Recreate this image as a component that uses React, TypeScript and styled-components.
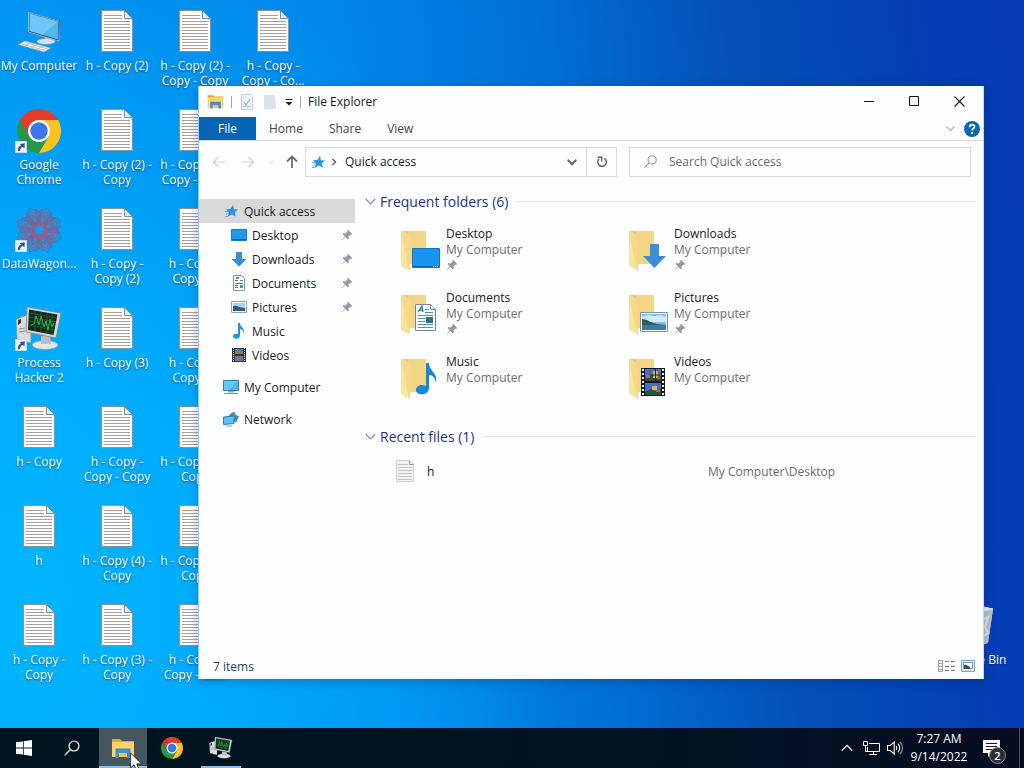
import React from "react";
import styled, { createGlobalStyle, css } from "styled-components";

const GlobalStyle = createGlobalStyle`
  *, *::before, *::after { box-sizing: border-box; }
  body { margin: 0; }
  body, button, input { font-family: "Open Sans", "Noto Sans", sans-serif; font-size: 12px; }
  button { border: 0; padding: 0; background: none; color: inherit; cursor: default; }
  a { color: inherit; text-decoration: none; }
  svg { display: block; flex: none; }
`;

/* ---------- Desktop ---------- */

const Screen = styled.div`
  display: flex;
  flex-direction: column;
  min-height: 100vh;
  overflow: hidden;
  background:
    radial-gradient(ellipse 56% 90% at 0% 78%, rgba(0, 182, 255, 1) 0%, rgba(0, 176, 255, 0.85) 40%, rgba(0, 150, 245, 0) 100%),
    linear-gradient(84deg, #0090ee 0%, #0089ea 36%, #0070d6 56%, #0450b8 73%, #0340b4 88%, #0639b4 100%);
`;

const Desktop = styled.main`
  position: relative;
  flex: 1;
`;

const IconGrid = styled.div`
  display: grid;
  grid-template-columns: repeat(auto-fill, 78px);
  grid-template-rows: repeat(7, 99px);
  grid-auto-flow: column;
`;

const Shortcut = styled.a<{ $last?: boolean }>`
  display: flex;
  flex-direction: column;
  align-items: center;
  padding-top: 8px;
  color: #fff;
  line-height: 15px;
  text-align: center;
  white-space: nowrap;
  text-shadow: 0 1px 2px rgba(0, 40, 90, 0.7);
  ${(p) => p.$last && css`grid-column: -2; grid-row: 7;`}
`;

const ShortcutArt = styled.span`
  position: relative;
  margin-bottom: 2px;
`;

const ArrowBadge = styled.svg`
  position: absolute;
  left: 0;
  bottom: 2px;
`;

/* ---------- Explorer window ---------- */

const Window = styled.section`
  position: absolute;
  top: 86px;
  right: 40px;
  bottom: 49px;
  left: 198px;
  display: flex;
  flex-direction: column;
  border-left: 1px solid #8fd0f2;
  border-right: 1px solid #c5d8f2;
  background: #fdfeff;
  color: #1a1a1a;
  box-shadow: 0 3px 10px rgba(0, 20, 80, 0.25);
`;

const TitleBar = styled.header`
  display: flex;
  align-items: center;
  height: 31px;
  padding: 0 1px 0 8px;
`;

const QuickTools = styled.div`
  display: flex;
  align-items: center;
  gap: 7px;
`;

const Divider = styled.span`
  width: 1px;
  height: 12px;
  background: #a5a5a8;
`;

const Title = styled.h1`
  flex: 1;
  margin: 0 0 0 7px;
  font-size: 12px;
  font-weight: 400;
`;

const WindowButton = styled.button`
  display: grid;
  place-items: center;
  width: 45px;
  height: 31px;
`;

const Ribbon = styled.nav`
  display: flex;
  align-items: center;
  height: 24px;
  padding-right: 3px;
  border-bottom: 1px solid #dadbdc;
`;

const RibbonTab = styled.button<{ $file?: boolean }>`
  align-self: stretch;
  padding: 0 13px;
  color: #444;
  ${(p) => p.$file && css`padding: 0 19px; background: #0564b4; color: #fff;`}
`;

const RibbonEnd = styled.div`
  display: flex;
  align-items: center;
  gap: 9px;
  margin-left: auto;
`;

const AddressRow = styled.div`
  display: flex;
  align-items: center;
  height: 41px;
  padding: 0 12px 0 6px;
`;

const NavButton = styled.button<{ $width: number }>`
  display: grid;
  place-items: center;
  width: ${(p) => p.$width}px;
  height: 28px;
`;

const AddressBox = styled.div`
  display: flex;
  flex: 306 1 0;
  align-items: center;
  height: 30px;
  margin-right: 12px;
  padding-left: 4px;
  border: 1px solid #d9d9d9;
`;

const Crumb = styled.button`
  flex: 1;
  padding-left: 3px;
  text-align: left;
`;

const RefreshButton = styled.button`
  display: grid;
  place-items: center;
  width: 30px;
  height: 28px;
  border-left: 1px solid #d9d9d9;
`;

const SearchBox = styled.label`
  display: flex;
  flex: 312 1 0;
  align-items: center;
  gap: 12px;
  height: 30px;
  padding: 0 14px;
  border: 1px solid #d9d9d9;
`;

const SearchInput = styled.input`
  flex: 1;
  min-width: 0;
  padding: 0;
  border: 0;
  outline: 0;
  background: none;
  &::placeholder { color: #6b6b6b; opacity: 1; }
`;

const Body = styled.div`
  display: flex;
  flex: 1;
`;

const SideNav = styled.nav`
  width: 156px;
  padding-top: 17px;
`;

const SideLink = styled.a<{ $child?: boolean; $active?: boolean; $spaced?: boolean }>`
  display: flex;
  align-items: center;
  gap: 5px;
  height: 24px;
  margin-top: ${(p) => (p.$spaced ? 8 : 0)}px;
  padding: 0 2px 0 ${(p) => (p.$child ? 32 : 24)}px;
  background: ${(p) => (p.$active ? "#d9d9d9" : "transparent")};
`;

const SideText = styled.span`
  flex: 1;
`;

const Content = styled.div`
  flex: 1;
  padding: 7px 7px 0 10px;
`;

const GroupHeading = styled.h2`
  display: flex;
  align-items: center;
  gap: 4px;
  height: 24px;
  margin: 0;
  color: #1e3287;
  font-size: 14px;
  font-weight: 400;
  &::after {
    content: "";
    flex: 1;
    height: 1px;
    margin-left: 4px;
    background: #dfe3ea;
  }
`;

const FolderGrid = styled.div`
  display: grid;
  grid-template-columns: repeat(auto-fill, 228px);
  margin: 5px 0 14px 36px;
`;

const FolderCard = styled.a`
  display: flex;
  gap: 5px;
  height: 64px;
  padding-top: 8px;
  line-height: 16px;
`;

const FolderText = styled.span`
  display: flex;
  flex-direction: column;
`;

const Muted = styled.span`
  color: #6d6d6d;
`;

const PinLine = styled.span`
  display: flex;
  align-items: center;
  height: 14px;
`;

const RecentRow = styled.a`
  display: grid;
  grid-template-columns: 31px 281px 1fr;
  align-items: center;
  height: 28px;
  margin-top: 9px;
  padding-left: 31px;
`;

const StatusBar = styled.footer`
  display: flex;
  align-items: center;
  gap: 6px;
  height: 26px;
  padding: 0 8px 0 14px;
  color: #333c50;
`;

const StatusText = styled.span`
  flex: 1;
`;

/* ---------- Taskbar ---------- */

const Taskbar = styled.footer`
  display: flex;
  height: 40px;
  background: linear-gradient(90deg, #001520 0%, #00131f 45%, #031124 75%, #070c1f 100%);
  color: #fff;
`;

const AppButtons = styled.div`
  display: flex;
  gap: 1px;
  margin-left: 3px;
`;

const TaskButton = styled.button<{ $active?: boolean; $running?: boolean }>`
  position: relative;
  display: grid;
  place-items: center;
  width: 48px;
  height: 40px;
  background: ${(p) => (p.$active ? "#46565f" : "transparent")};
  ${(p) => (p.$active || p.$running) && css`
    &::after {
      content: "";
      position: absolute;
      right: ${p.$active ? 0 : 4}px;
      bottom: 0;
      left: ${p.$active ? 0 : 4}px;
      height: 2px;
      background: #80bfee;
    }
  `}
`;

const Pointer = styled.svg`
  position: absolute;
  top: 24px;
  left: 31px;
  z-index: 2;
`;

const Tray = styled.div`
  display: flex;
  align-items: center;
  margin-left: auto;
`;

const TrayButton = styled.button<{ $width: number }>`
  display: grid;
  place-items: center;
  width: ${(p) => p.$width}px;
  height: 40px;
`;

const Clock = styled.time`
  width: 66px;
  line-height: 18px;
  text-align: center;
`;

const Notices = styled.button`
  position: relative;
  width: 47px;
  height: 40px;
  padding-left: 11px;
`;

const NoticeCount = styled.span`
  position: absolute;
  top: 19px;
  left: 17px;
  width: 17px;
  height: 17px;
  border: 1px solid #8b8e98;
  border-radius: 50%;
  background: #2b2e3b;
  font-size: 11px;
  font-weight: 600;
  line-height: 15px;
`;

const ShowDesktop = styled.button`
  width: 5px;
  height: 40px;
  border-left: 1px solid #4a5060;
`;

/* ---------- Drawings ---------- */

const TextFileArt = () => (
  <svg width="48" height="48" viewBox="0 0 48 48">
    <path d="M8.500 2.500h23l8 8v33h-31z" fill="#fdfdfb" stroke="#85939b" />
    <path d="M31.500 2.500v8h8z" fill="#d9eef9" stroke="#7c8c96" />
    <path d="M11 7.500h18M11 10.500h18M11 13.500h26M11 16.500h26M11 19.500h26M11 22.500h26M11 25.500h26M11 28.500h26M11 31.500h26M11 34.500h26M11 37.500h26M11 40.500h26" stroke="#a5a1a0" />
  </svg>
);

const ComputerArt = () => (
  <svg width="48" height="48" viewBox="0 0 48 48">
    <path d="M13.500 4.500 45 12.500 44 33 13.500 24z" fill="#1a3550" />
    <path d="M14.500 5.500 43 13.500v18L14.500 23z" fill="#4fb6f3" />
    <path d="M14.500 5.500 43 13.500 28 27 14.500 23z" fill="#83cef8" opacity=".6" />
    <path d="M13.500 4.500 44 13v20L13.500 24z" fill="none" stroke="#bfe0ee" strokeWidth=".7" />
    <path d="M30 29l7 2v4l-7-1z" fill="#b3c1c8" />
    <ellipse cx="31" cy="33.500" rx="9" ry="2.800" fill="#dbe4e8" stroke="#9eb0ba" strokeWidth=".6" />
    <path d="M3 36.500 10 33l26 7-7 4z" fill="#f0f3f5" stroke="#8fa3ad" strokeWidth=".7" />
    <path d="m7 36 23 6.500M10 34.500 33 41M10 38l6-3.500M16 40l6-4M22 42l6-4" stroke="#a8b5bc" strokeWidth=".7" />
  </svg>
);

const ChromeArt = ({ size }: { size: number }) => (
  <svg width={size} height={size} viewBox="0 0 48 48">
    <path d="M24 13H43.050A22 22 0 0 1 24 46L33.500 29.500z" fill="#fcc31e" />
    <path d="M33.500 29.500 24 46A22 22 0 0 1 4.950 13L14.500 29.500z" fill="#279847" />
    <path d="M4.950 13A22 22 0 0 1 43.050 13H24z" fill="#e33b2e" />
    <path d="M4.950 13 14.500 29.500 24 24V13z" fill="#e33b2e" />
    <circle cx="24" cy="24" r="11" fill="#fff" />
    <circle cx="24" cy="24" r="8.700" fill="#3b78e7" />
  </svg>
);

const angles = [0, 45, 90, 135, 180, 225, 270, 315];

const WagonArt = () => (
  <svg width="48" height="48" viewBox="0 0 48 48">
    <g fill="none" strokeWidth="1">
      {angles.map((a) => (
        <g key={a} transform={`rotate(${a + 22} 24 24)`}>
          <path d="M24 18 15 9 24 .500 33 9z" stroke="#4a76b0" />
          <path d="M19 18 13 6 24 12 35 6 29 18" stroke="#6a6f9c" />
          <path d="M24 18 19 10l5-6 5 6z" stroke="#b4506e" />
          <path d="m18 14 6 6 6-6" stroke="#c04c66" />
          <circle cx="24" cy="9" r="1.500" fill="#b05272" />
        </g>
      ))}
    </g>
  </svg>
);

const HackerArt = ({ size }: { size: number }) => (
  <svg width={size} height={size} viewBox="0 0 48 48">
    <path d="M1 14 12 10l4 2v26L2 34z" fill="#d8dcdd" stroke="#848b8e" strokeWidth=".7" />
    <path d="M3 15l3-1v4l-3 2z" fill="#30383b" />
    <path d="M4 24l6-1M4 27l6-1" stroke="#8b9497" />
    <ellipse cx="30" cy="40" rx="13" ry="4.500" fill="#e3e7e8" stroke="#899295" strokeWidth=".7" />
    <path d="M26 31h9l1 8H26z" fill="#b8bfc1" />
    <path d="M12 2 46 8 41 33 11 27z" fill="#d3d8d5" stroke="#7d8687" strokeWidth=".8" />
    <path d="M14 4.500 42.500 9.500 38.500 30 13 25z" fill="#0f2b1b" />
    <path d="M14 8l28 5M14 12l27 5M14 16l26 5M14 20l25 5M20 6v20M26 7v20M32 8v20M37 9v20" stroke="#2c6a3a" strokeWidth=".7" />
    <path d="m16 20 3-1 2-8 3 9 2-9 3 11 2-6 2 9 2-11 2 8 2-4" fill="none" stroke="#35b040" strokeWidth="1" />
  </svg>
);

const BinArt = () => (
  <svg width="48" height="48" viewBox="0 0 48 48">
    <path d="M8 7 24 3l18 4-5 34-13 4-11-4z" fill="#cbd2d8" />
    <path d="M24 10 42 7l-5 34-13 4z" fill="#b7c0c9" />
    <path d="M8 7 24 3l18 4-18 4z" fill="#eef3f6" stroke="#dce5ea" />
    <path d="m29 19 8-4-3 10 3 6-6 4" fill="none" stroke="#e2e7ea" strokeWidth="2" />
  </svg>
);

const LinkBadge = () => (
  <ArrowBadge width="12" height="12" viewBox="0 0 12 12">
    <path d="M.500.500h11v11h-11z" fill="#f5f9fb" stroke="#c9dce6" />
    <path d="M3 10C2.600 7 4 5 6 4.500L4.800 3 9.800 2.300 9.500 7.300 7.800 6C6 6.500 5 8 5 10z" fill="#27589c" />
  </ArrowBadge>
);

const ExplorerArt = ({ size }: { size: number }) => (
  <svg width={size} height={size} viewBox="0 0 24 24">
    <path d="M1 3h8l2 2h12v4H1z" fill="#e6a52c" />
    <path d="M1 6h22v15H1z" fill="#fcd46b" />
    <path d="M4.500 12.500h15V22H16v-5H8v5H4.500z" fill="#3e90cc" />
    <path d="M9 17h6v4H9z" fill="#f7c24d" />
  </svg>
);

const StarArt = () => (
  <svg width="16" height="16" viewBox="0 0 16 16">
    <path d="m10 2 .9 4.200 4.300.2-3.400 2.900 1 4.500-4-2.400-3.900 2.400.9-4.500L3 6.300l4.400-.4z" fill="#2594de" />
    <path d="M2 8.500h3M3 11h2M2 13.500h3" stroke="#63b7ea" />
  </svg>
);

const PinArt = () => (
  <svg width="12" height="12" viewBox="0 0 12 12">
    <path d="m7 .800 4.300 4.100-1 .900-.900-.300-1.900 2 .300 2-1 .900L4.400 8 1 11.300.600 11 4 7.400 1.600 5l.900-.900 2 .300 2-2-.400-.800z" fill="#8f9ba4" />
  </svg>
);

const DesktopSmall = () => (
  <svg width="16" height="16" viewBox="0 0 16 16">
    <path d="M.500 2.500h15v11H.500z" fill="#1e9bf0" stroke="#1779c4" />
    <path d="M1 12.500h14" stroke="#0d62a8" />
  </svg>
);
const DownSmall = () => (
  <svg width="16" height="16" viewBox="0 0 16 16">
    <path d="M5 1h6v7h4.500L8 15.500.500 8H5z" fill="#388dd2" />
  </svg>
);
const DocSmall = () => (
  <svg width="16" height="16" viewBox="0 0 16 16">
    <path d="M2.500.500h8l3 3v12h-11z" fill="#fff" stroke="#7f95a5" />
    <path d="M4 5.500h3M4 8.500h8M4 10.500h3M4 12.500h3M9 5.500h3" stroke="#3c82ad" />
    <path d="M5 2h3v2H5zM9 10h3v3H9z" fill="#4094c2" />
  </svg>
);
const PictureSmall = () => (
  <svg width="16" height="16" viewBox="0 0 16 16">
    <path d="M.500 2.500h15v11H.500z" fill="#fff" stroke="#96a0a9" />
    <path d="M2 4h12v8H2z" fill="#a8d4ee" />
    <path d="M2 7c4-1 6 2 12 2v3H2z" fill="#33597e" />
  </svg>
);
const MusicSmall = () => (
  <svg width="16" height="16" viewBox="0 0 16 16">
    <path d="M7 0h2c0 4 5 4.500 3.500 10-.300-2.500-1.500-3.500-3.500-4v6.500C9 16.500 2 16.800 2 13.300c0-2.300 3-3.300 5-2z" fill="#1b94e4" />
  </svg>
);
const VideoSmall = () => (
  <svg width="16" height="16" viewBox="0 0 16 16">
    <path d="M1 1h14v14H1z" fill="#34353b" />
    <path d="M4 2h8v5H4zM4 9h8v5H4z" fill="#587bbc" />
    <path d="m4 6 4-3 4 4H4zM4 13l4-3 4 4H4z" fill="#8a7c50" />
    <path d="M2.500 1v14M13.500 1v14" stroke="#e4e4e4" strokeDasharray="1 1" />
  </svg>
);
const PcSmall = () => (
  <svg width="16" height="16" viewBox="0 0 16 16">
    <path d="M.500 1.500h15v10H.500z" fill="#4fb9ea" stroke="#2b7fae" />
    <path d="m1 2 14 0-9 9H1z" fill="#8ad6f5" opacity=".5" />
    <path d="M5 12h6v1.500H5z" fill="#8ea9b6" />
    <path d="M1 14.500h14" stroke="#82949d" />
  </svg>
);
const NetworkSmall = () => (
  <svg width="16" height="16" viewBox="0 0 16 16">
    <path d="M6 4 11 .500l1.500 3L16 5.500l-3 6-7-3z" fill="#3a8fbd" />
    <path d="m.500 6 10.500-1v7.500L.500 13.500z" fill="#5fc0ef" stroke="#2683b6" />
    <path d="M3 15h6" stroke="#7da1b4" />
  </svg>
);

const overlays: Record<string, React.ReactNode> = {
  Desktop: (
    <>
      <path d="M11.500 20.500h27v19h-27z" fill="#1795ef" stroke="#1278c6" />
      <path d="M12 38.500h26" stroke="#0b5da3" />
      <path d="M32 38.500h5" stroke="#d4ebfa" strokeDasharray="1 1" />
    </>
  ),
  Downloads: <path d="M21 16h9v12h7L25.500 40 14 28h7z" fill="#388fd6" />,
  Documents: (
    <>
      <path d="M14.500 12.500h15l5 5v21h-20z" fill="#fff" stroke="#758895" />
      <path d="M29.500 12.500v5h5" fill="#e5edf2" stroke="#758895" />
      <path d="m17 20 4-6 1 6m-4-2h4" fill="none" stroke="#2480b4" strokeWidth="1.300" />
      <path d="M24 17.500h4M24 20.500h8M17 23.500h15M17 26.500h7M17 29.500h7M17 32.500h15M17 35.500h15" stroke="#4e93bd" />
      <path d="M25 25h7v6h-7z" fill="#386d80" />
    </>
  ),
  Pictures: (
    <>
      <path d="M11.500 20.500h27v19h-27z" fill="#fff" stroke="#6d93b5" />
      <path d="M13 22h24v16H13z" fill="#80bce9" />
      <path d="m13 25 6-2 6 1 7-1 5 2v5H13z" fill="#d4eaf7" />
      <path d="M13 27c6 0 8 4 15 5l9 1v1H13z" fill="#315b50" />
      <path d="M13 33h24v5H13z" fill="#387ba8" />
    </>
  ),
  Music: (
    <path d="M25 7h3c0 8 9 9 7 20-1-5-3-8-7-8v13c0 8-13 8-13 2 0-5 6-6 10-4z" fill="#1489dc" />
  ),
  Videos: (
    <>
      <path d="M13 12h24v28H13z" transform="translate(-1 0)" fill="#17181c" />
      <path d="M16 13h16v12H16zM16 27h16v12H16z" fill="#426fcd" />
      <path d="m16 21 5-3 5 4 6-2v5H16zM16 36l6-3 4 2 6-2v6H16z" fill="#2a5145" />
      <path d="M24 15h5v7h-5zM23 30h5v4h-5z" fill="#e9b530" />
      <path d="M26.500 13v12M22 19h9" stroke="#22242a" />
      <path d="M17 19h4v3h-4zM28 21h3v2h-3zM27 34h4v2h-4z" fill="#d9582b" />
      <path d="M14 13v27M34 13v27" stroke="#eceff2" strokeWidth="2" strokeDasharray="2 2" />
    </>
  ),
};

const FolderArt = ({ kind }: { kind: string }) => (
  <svg width="40" height="48" viewBox="0 0 40 48" aria-hidden="true">
    <g transform="translate(0 2)">
      <path d="M2 3h23v33H9z" fill="#eccb70" />
      <path d="M7 3h18v33H9z" fill="#f3d684" />
      <path d="m0 3 9 5v35L0 38z" fill="#fbe49a" />
      <path d="m0 3h2l7 5v35l-1-1z" fill="#f5d98a" />
    </g>
    <g transform="translate(0 2)">{overlays[kind]}</g>
  </svg>
);

const Chevron = ({ color, size = 10, width = 1.5, up }: { color: string; size?: number; width?: number; up?: boolean }) => (
  <svg width={size} height={size} viewBox="0 0 10 10">
    <path d={up ? "M.700 7.200 5 2.800l4.300 4.400" : "M.700 2.800 5 7.200l4.300-4.400"} fill="none" stroke={color} strokeWidth={width} />
  </svg>
);

const Lens = ({ color, size }: { color: string; size: number }) => (
  <svg width={size} height={size} viewBox="0 0 16 16" fill="none" stroke={color} strokeWidth="1.200">
    <circle cx="10" cy="6" r="5" />
    <path d="M6.500 9.500.700 15.300" />
  </svg>
);

const Arrow = ({ color, turn, width = 1.2 }: { color: string; turn: number; width?: number }) => (
  <svg width="14" height="14" viewBox="0 0 14 14">
    <path d="M13 7H1.500M6.500 2l-5 5 5 5" transform={`rotate(${turn} 7 7)`} fill="none" stroke={color} strokeWidth={width} />
  </svg>
);

/* ---------- Data ---------- */

type DesktopItem = { art?: React.ReactNode; lines: string[]; linked?: boolean };

const desktopItems: DesktopItem[] = [
  { art: <ComputerArt />, lines: ["My Computer"] },
  { art: <ChromeArt size={48} />, lines: ["Google", "Chrome"], linked: true },
  { art: <WagonArt />, lines: ["DataWagon..."], linked: true },
  { art: <HackerArt size={48} />, lines: ["Process", "Hacker 2"], linked: true },
  { lines: ["h - Copy"] },
  { lines: ["h"] },
  { lines: ["h - Copy -", "Copy"] },
  { lines: ["h - Copy (2)"] },
  { lines: ["h - Copy (2) -", "Copy"] },
  { lines: ["h - Copy -", "Copy (2)"] },
  { lines: ["h - Copy (3)"] },
  { lines: ["h - Copy -", "Copy - Copy"] },
  { lines: ["h - Copy (4) -", "Copy"] },
  { lines: ["h - Copy (3) -", "Copy"] },
  { lines: ["h - Copy (2) -", "Copy - Copy"] },
  { lines: ["h - Copy (3) -", "Copy - Copy"] },
  { lines: ["h - Copy -", "Copy (3)"] },
  { lines: ["h - Copy -", "Copy (4)"] },
  { lines: ["h - Copy (5) -", "Copy"] },
  { lines: ["h - Copy (6) -", "Copy"] },
  { lines: ["h - Copy -", "Copy - Co..."] },
  { lines: ["h - Copy -", "Copy - Co..."] },
];

const sideItems = [
  { name: "Desktop", icon: <DesktopSmall />, pinned: true },
  { name: "Downloads", icon: <DownSmall />, pinned: true },
  { name: "Documents", icon: <DocSmall />, pinned: true },
  { name: "Pictures", icon: <PictureSmall />, pinned: true },
  { name: "Music", icon: <MusicSmall />, pinned: false },
  { name: "Videos", icon: <VideoSmall />, pinned: false },
];

const folders = [
  { name: "Desktop", pinned: true },
  { name: "Downloads", pinned: true },
  { name: "Documents", pinned: true },
  { name: "Pictures", pinned: true },
  { name: "Music", pinned: false },
  { name: "Videos", pinned: false },
];

/* ---------- Parts ---------- */

const DesktopShortcut = ({ item, last }: { item: DesktopItem; last?: boolean }) => (
  <Shortcut href="#" $last={last}>
    <ShortcutArt>
      {item.art ?? <TextFileArt />}
      {item.linked && <LinkBadge />}
    </ShortcutArt>
    {item.lines.map((line) => (
      <span key={line}>{line}</span>
    ))}
  </Shortcut>
);

const ExplorerWindow = () => (
  <Window aria-label="File Explorer">
    <TitleBar>
      <QuickTools>
        <ExplorerArt size={17} />
        <Divider />
        <button aria-label="Properties">
          <svg width="16" height="16" viewBox="0 0 16 16">
            <path d="M2.500.500h9l2 2v13h-11z" fill="#eef3fa" stroke="#c3ccd9" />
            <path d="m5 8 2 3 4-6" fill="none" stroke="#9db4d3" strokeWidth="1.300" />
            <path d="M4 12.500h8" stroke="#b9c7da" />
          </svg>
        </button>
        <button aria-label="New folder">
          <svg width="16" height="16" viewBox="0 0 16 16">
            <path d="M2 1h11l1 14H2z" fill="#dce1eb" />
          </svg>
        </button>
        <button aria-label="Customize toolbar">
          <svg width="8" height="9" viewBox="0 0 8 9">
            <path d="M.500 2.500h7" stroke="#222" />
            <path d="M.500 5h7L4 8.500z" fill="#222" />
          </svg>
        </button>
        <Divider />
      </QuickTools>
      <Title>File Explorer</Title>
      <WindowButton aria-label="Minimize">
        <svg width="11" height="11"><path d="M0 5.500h10" stroke="#111" /></svg>
      </WindowButton>
      <WindowButton aria-label="Maximize">
        <svg width="11" height="11"><path d="M.500.500h9v9h-9z" fill="none" stroke="#111" /></svg>
      </WindowButton>
      <WindowButton aria-label="Close">
        <svg width="11" height="11"><path d="m.500.500 10 10m0-10-10 10" stroke="#111" strokeWidth="1.100" /></svg>
      </WindowButton>
    </TitleBar>
    <Ribbon>
      <RibbonTab $file>File</RibbonTab>
      <RibbonTab>Home</RibbonTab>
      <RibbonTab>Share</RibbonTab>
      <RibbonTab>View</RibbonTab>
      <RibbonEnd>
        <button aria-label="Expand ribbon"><Chevron color="#b5b8bd" size={9} /></button>
        <button aria-label="Help">
          <svg width="16" height="16" viewBox="0 0 16 16">
            <circle cx="8" cy="8" r="8" fill="#0a67b3" />
            <path d="M5.700 6.200C5.700 2.900 10.500 3 10.500 5.800 10.500 7.600 8.100 7.500 8.100 9.600" fill="none" stroke="#fff" strokeWidth="1.700" />
            <circle cx="8.100" cy="11.900" r="1.100" fill="#fff" />
          </svg>
        </button>
      </RibbonEnd>
    </Ribbon>
    <AddressRow>
      <NavButton $width={28} aria-label="Back"><Arrow color="#cdcfd2" turn={0} /></NavButton>
      <NavButton $width={29} aria-label="Forward"><Arrow color="#cdcfd2" turn={180} /></NavButton>
      <NavButton $width={17} aria-label="Recent locations"><Chevron color="#c9cbce" size={6} /></NavButton>
      <NavButton $width={26} aria-label="Up"><Arrow color="#6c6c70" turn={90} width={1.8} /></NavButton>
      <AddressBox>
        <StarArt />
        <svg width="16" height="10" viewBox="0 0 16 10">
          <path d="m6.500 2 3 3-3 3" fill="none" stroke="#555" strokeWidth="1.300" />
        </svg>
        <Crumb>Quick access</Crumb>
        <NavButton $width={28} aria-label="Previous locations"><Chevron color="#6a6a6e" width={2} /></NavButton>
        <RefreshButton aria-label="Refresh">
          <svg width="12" height="12" viewBox="0 0 12 12">
            <path d="M8.300 2.300A4.300 4.300 0 1 1 3 3" fill="none" stroke="#66666a" strokeWidth="1.500" />
            <path d="M1.500 1.200h4.200v4.200" fill="none" stroke="#66666a" strokeWidth="1.500" />
          </svg>
        </RefreshButton>
      </AddressBox>
      <SearchBox>
        <Lens color="#8a8a8e" size={13} />
        <SearchInput type="search" placeholder="Search Quick access" aria-label="Search Quick access" />
      </SearchBox>
    </AddressRow>
    <Body>
      <SideNav>
        <SideLink href="#" $active><StarArt /><SideText>Quick access</SideText></SideLink>
        {sideItems.map((item) => (
          <SideLink key={item.name} href="#" $child>
            {item.icon}
            <SideText>{item.name}</SideText>
            {item.pinned && <PinArt />}
          </SideLink>
        ))}
        <SideLink href="#" $spaced><PcSmall /><SideText>My Computer</SideText></SideLink>
        <SideLink href="#" $spaced><NetworkSmall /><SideText>Network</SideText></SideLink>
      </SideNav>
      <Content>
        <GroupHeading><Chevron color="#8e929a" size={11} width={1.2} />Frequent folders (6)</GroupHeading>
        <FolderGrid>
          {folders.map((folder) => (
            <FolderCard key={folder.name} href="#">
              <FolderArt kind={folder.name} />
              <FolderText>
                <span>{folder.name}</span>
                <Muted>My Computer</Muted>
                {folder.pinned && <PinLine><PinArt /></PinLine>}
              </FolderText>
            </FolderCard>
          ))}
        </FolderGrid>
        <GroupHeading><Chevron color="#8e929a" size={11} width={1.2} />Recent files (1)</GroupHeading>
        <RecentRow href="#">
          <svg width="18" height="22" viewBox="0 0 18 22">
            <path d="M.500.500h13l4 4v17H.500z" fill="#f2f2f2" stroke="#cfcfd1" />
            <path d="M13.500.500v4h4" fill="none" stroke="#999" />
            <path d="M2 4.500h10M2 7.500h14M2 10.500h14M2 13.500h14M2 16.500h14M2 19.500h14" stroke="#c2c2c4" />
          </svg>
          <span>h</span>
          <Muted>My Computer\Desktop</Muted>
        </RecentRow>
      </Content>
    </Body>
    <StatusBar>
      <StatusText>7 items</StatusText>
      <button aria-label="Details view">
        <svg width="17" height="14" viewBox="0 0 17 14">
          <path d="M.500 1.500h4v11h-4zM.500 4.500h4M.500 7.500h4M.500 10.500h4" fill="none" stroke="#9a9a9f" />
          <path d="M7 2.500h10M7 7.500h10M7 11.500h10" stroke="#777" strokeDasharray="4 2" />
        </svg>
      </button>
      <button aria-label="Large icons view">
        <svg width="14" height="12" viewBox="0 0 14 12">
          <path d="M.500.500h13v11H.500z" fill="#d8ecfb" stroke="#76a8d4" />
          <path d="M2.500 2.500h9v6h-9z" fill="#fff" stroke="#8a9aa8" />
          <path d="M3 5c2-1 4 1 6 2v2H3z" fill="#2f5364" />
        </svg>
      </button>
    </StatusBar>
  </Window>
);

const SystemTaskbar = () => (
  <Taskbar>
    <TaskButton aria-label="Start">
      <svg width="16" height="16" viewBox="0 0 17 17" fill="#fff">
        <path d="M0 2.500 7.300 1.500v6.500H0zM8.200 1.400 17 0v8H8.200zM0 9h7.300v6.500L0 14.500zM8.200 9H17v8l-8.800-1.400z" />
      </svg>
    </TaskButton>
    <TaskButton aria-label="Search"><Lens color="#fff" size={16} /></TaskButton>
    <AppButtons>
      <TaskButton $active aria-label="File Explorer">
        <ExplorerArt size={24} />
        <Pointer width="13" height="20" viewBox="0 0 13 20">
          <path d="M.600 1v15l3.500-3.200 2.500 6 2.600-1.100-2.500-5.800h4.900z" fill="#fff" stroke="#222" strokeWidth=".9" />
        </Pointer>
      </TaskButton>
      <TaskButton aria-label="Google Chrome"><ChromeArt size={24} /></TaskButton>
      <TaskButton $running aria-label="Process Hacker"><HackerArt size={24} /></TaskButton>
    </AppButtons>
    <Tray>
      <TrayButton $width={24} aria-label="Show hidden icons"><Chevron color="#fff" size={12} width={1.1} up /></TrayButton>
      <TrayButton $width={24} aria-label="Network">
        <svg width="17" height="15" viewBox="0 0 17 15" fill="none" stroke="#fff">
          <path d="M6 2.500h10.500v8h-12V6M10.500 11v3M6 13.500h8M.500.500h4v4h-4zM2.500 5v5.500H5" />
        </svg>
      </TrayButton>
      <TrayButton $width={23} aria-label="Volume">
        <svg width="16" height="14" viewBox="0 0 16 14" fill="none" stroke="#fff" strokeWidth="1.100">
          <path d="M.500 4.500h2.700l4-3.500v12l-4-3.500H.500zM9 5c1 1 1 3 0 4M11 3c2.300 2 2.300 6 0 8" />
          <path d="M13 1c3.300 3.200 3.300 8.800 0 12" stroke="#8b93a0" />
        </svg>
      </TrayButton>
      <Clock>7:27 AM<br />9/14/2022</Clock>
      <Notices aria-label="Notifications">
        <svg width="17" height="17" viewBox="0 0 17 17">
          <path d="M0 0h17v13H9l-4 4v-4H0z" fill="#fff" />
          <path d="M3 3.500h11M3 6.500h11M3 9.500h8" stroke="#10172a" />
        </svg>
        <NoticeCount>2</NoticeCount>
      </Notices>
      <ShowDesktop aria-label="Show desktop" />
    </Tray>
  </Taskbar>
);

export default function App() {
  return (
    <Screen>
      <GlobalStyle />
      <Desktop>
        <IconGrid>
          {desktopItems.map((item, i) => (
            <DesktopShortcut key={i} item={item} />
          ))}
          <DesktopShortcut item={{ art: <BinArt />, lines: ["Recycle Bin"] }} last />
        </IconGrid>
        <ExplorerWindow />
      </Desktop>
      <SystemTaskbar />
    </Screen>
  );
}
